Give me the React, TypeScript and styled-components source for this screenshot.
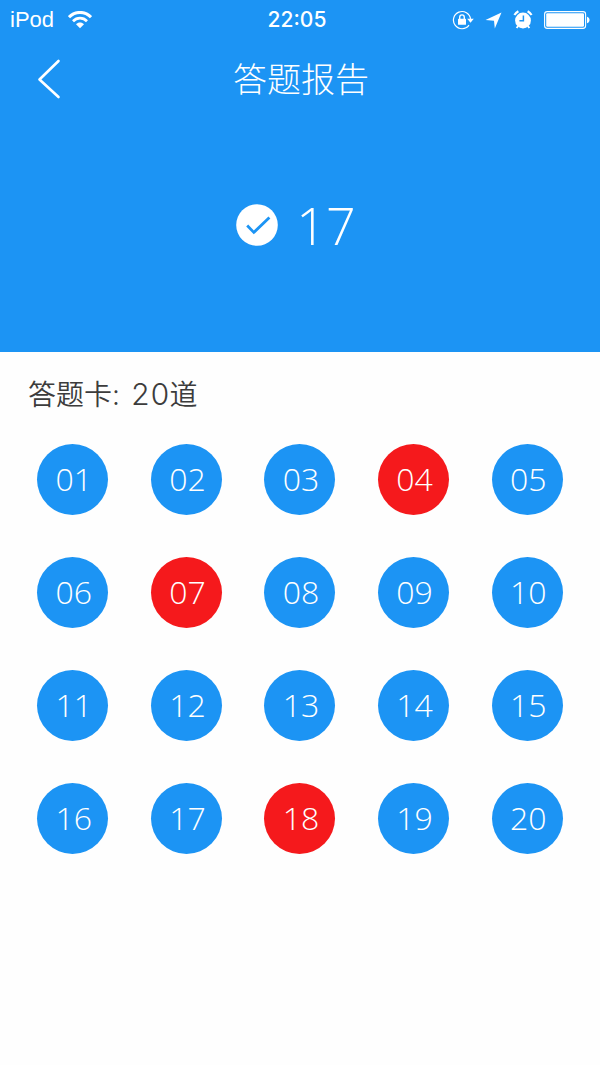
import React from "react";
import styled, { createGlobalStyle } from "styled-components";

const BLUE = "#1c94f4";
const RED = "#f5191c";

const GlobalStyle = createGlobalStyle`
  *, *::before, *::after { box-sizing: border-box; }
  body {
    margin: 0;
    background: #fefefe;
    color: #3c3c3c;
    font-family: Inter, "Noto Sans CJK SC", sans-serif;
    font-weight: 300;
  }
  button {
    font: inherit;
    border: 0;
    cursor: pointer;
  }
`;

const Page = styled.div`
  min-height: 100vh;
`;

const Hero = styled.header`
  background: ${BLUE};
  color: #fff;
`;

const StatusBar = styled.div`
  display: grid;
  grid-template-columns: 1fr auto 1fr;
  align-items: center;
  height: 40px;
  padding: 0 10px;
  font-family: "Liberation Sans", Arial, sans-serif;
  font-size: 22px;
  font-weight: 400;
`;

const StatusGroup = styled.div<{ $end?: boolean }>`
  display: flex;
  align-items: center;
  gap: ${(p) => (p.$end ? 11 : 14)}px;
  justify-content: ${(p) => (p.$end ? "flex-end" : "flex-start")};
`;

const Clock = styled.time`
  padding-right: 6px;
  font-family: Inter, sans-serif;
  font-size: 21px;
  line-height: 24px;
  font-weight: 500;
`;

const TitleBar = styled.div`
  display: grid;
  grid-template-columns: 80px 1fr 80px;
  align-items: center;
  height: 80px;
`;

const BackButton = styled.button`
  display: flex;
  justify-content: flex-end;
  padding: 0 19px 3px 0;
  background: none;
  color: inherit;
`;

const Title = styled.h1`
  margin: 0;
  padding-left: 2px;
  text-align: center;
  font-size: 34px;
  line-height: 48px;
  font-weight: 300;
`;

const Score = styled.div`
  display: flex;
  align-items: center;
  justify-content: center;
  gap: 18px;
  height: 232px;
  padding-bottom: 22px;
  padding-right: 8px;
`;

const ScoreValue = styled.span`
  font-family: "Open Sans", sans-serif;
  font-size: 52px;
  line-height: 60px;
`;

const SheetHeading = styled.h2`
  margin: 0;
  padding: 23px 28px 30px;
  font-size: 28px;
  line-height: 38px;
  font-weight: 350;
`;

const HeadingCount = styled.span`
  margin-left: 3px;
  font-size: 30px;
  font-feature-settings: "tnum";
`;

const AnswerGrid = styled.div`
  display: grid;
  grid-template-columns: repeat(5, 1fr);
  justify-items: center;
  gap: 42px 0;
  padding: 0 16px 42px;
`;

const Answer = styled.button<{ $wrong: boolean }>`
  width: 71px;
  height: 71px;
  padding: 0 0 2px 2px;
  border-radius: 50%;
  background: ${(p) => (p.$wrong ? RED : BLUE)};
  color: #fff;
  && {
    font-family: "Open Sans", sans-serif;
    font-size: 32px;
    line-height: 40px;
  }
`;

const WifiIcon = () => (
  <svg width="24" height="18" viewBox="0 0 24 18" fill="none" stroke="#fff" aria-hidden="true">
    <path d="M1 6.2C7.2-.2 16.8-.2 23 6.2" strokeWidth="3" />
    <path d="M5 10.2c4-4 10-4 14 0" strokeWidth="2.7" />
    <path d="M12 17.2 8 13.2c2.3-2.3 5.7-2.3 8 0Z" fill="#fff" stroke="none" />
  </svg>
);

const RotationLockIcon = () => (
  <svg width="22" height="20" viewBox="0 0 22 20" fill="none" stroke="#fff" aria-hidden="true">
    <path d="M17 15.2a8.6 8.6 0 1 1 1.6-6" strokeWidth="1.2" />
    <path d="M15.2 8.8h6.6l-3.3 4Z" fill="#fff" stroke="none" />
    <rect x="6" y="8.8" width="8" height="6" rx=".6" fill="#fff" stroke="none" />
    <path d="M7.7 9V7.2a2.3 2.3 0 0 1 4.6 0V9" strokeWidth="1.4" />
  </svg>
);

const LocationIcon = () => (
  <svg width="17" height="17" viewBox="0 0 17 17" fill="#fff" aria-hidden="true">
    <path d="M16.5.5 9.8 16.5 9 8.8.5 8Z" />
  </svg>
);

const AlarmIcon = () => (
  <svg width="20" height="20" viewBox="0 0 20 20" fill="none" stroke="#fff" aria-hidden="true">
    <circle cx="10" cy="10.5" r="7.9" fill="#fff" stroke="none" />
    <path d="M1.4 5A12 12 0 0 1 5.4 1.3M18.6 5a12 12 0 0 0-4-3.7" strokeWidth="2.2" />
    <path d="m5.2 16-1.6 2m11.2-2 1.6 2" strokeWidth="2" />
    <path d="M10.4 5.4v5.4H6.4" stroke={BLUE} strokeWidth="1.5" />
  </svg>
);

const BatteryIcon = () => (
  <svg width="46" height="18" viewBox="0 0 46 18" fill="#fff" aria-hidden="true">
    <rect x=".6" y=".6" width="41" height="16.8" rx="2.6" fill="none" stroke="#fff" strokeWidth="1.1" />
    <rect x="2.2" y="2.2" width="37.8" height="13.6" rx="1.2" />
    <path d="M43 5.8c3.4.8 3.4 5.6 0 6.4Z" />
  </svg>
);

const BackIcon = () => (
  <svg width="24" height="40" viewBox="0 0 24 40" fill="none" stroke="#fff" strokeWidth="2.6" strokeLinecap="round" strokeLinejoin="round" aria-hidden="true">
    <path d="M21.5 2 2.5 20.5l19 17.5" />
  </svg>
);

const CheckIcon = () => (
  <svg width="42" height="42" viewBox="0 0 42 42" fill="none" aria-hidden="true">
    <circle cx="21" cy="21" r="20.8" fill="#fff" />
    <path d="m11.2 21.6 6.6 6.8 15.6-15" stroke={BLUE} strokeWidth="2.8" />
  </svg>
);

const TOTAL = 20;
const WRONG = [4, 7, 18];
const numbers = Array.from({ length: TOTAL }, (_, i) => i + 1);

export default function App() {
  return (
    <Page>
      <GlobalStyle />
      <Hero>
        <StatusBar>
          <StatusGroup>
            <span>iPod</span>
            <WifiIcon />
          </StatusGroup>
          <Clock>22:05</Clock>
          <StatusGroup $end>
            <RotationLockIcon />
            <LocationIcon />
            <AlarmIcon />
            <BatteryIcon />
          </StatusGroup>
        </StatusBar>
        <TitleBar>
          <BackButton type="button" aria-label="返回">
            <BackIcon />
          </BackButton>
          <Title>答题报告</Title>
        </TitleBar>
        <Score>
          <CheckIcon />
          <ScoreValue>{TOTAL - WRONG.length}</ScoreValue>
        </Score>
      </Hero>
      <main>
        <SheetHeading>
          答题卡: <HeadingCount>{TOTAL}</HeadingCount>道
        </SheetHeading>
        <AnswerGrid>
          {numbers.map((n) => (
            <Answer key={n} type="button" $wrong={WRONG.includes(n)}>
              {String(n).padStart(2, "0")}
            </Answer>
          ))}
        </AnswerGrid>
      </main>
    </Page>
  );
}
